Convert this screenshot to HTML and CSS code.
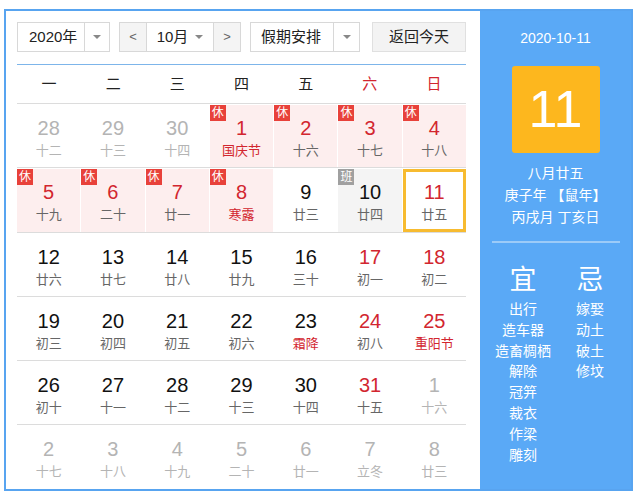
FILE: index.html
```html
<!DOCTYPE html>
<html lang="zh-CN">
<head>
<meta charset="utf-8">
<title>万年历</title>
<link rel="stylesheet" href="styles.css">
</head>
<body>
<div class="cal">
  <div class="main">
    <div class="controls">
      <div class="sel year"><span class="lbl">2020年</span><span class="arr"><i class="caret"></i></span></div>
      <div class="month-group">
        <span class="nav">&lt;</span>
        <span class="mon">10月<i class="caret"></i></span>
        <span class="nav">&gt;</span>
      </div>
      <div class="sel hol"><span class="lbl">假期安排</span><span class="arr"><i class="caret"></i></span></div>
      <div class="today-btn">返回今天</div>
    </div>
    <div class="week">
      <span>一</span><span>二</span><span>三</span><span>四</span><span>五</span><span class="red">六</span><span class="red">日</span>
    </div>
    <div class="row">
      <div class="cell out"><b>28</b><em>十二</em></div>
      <div class="cell out"><b>29</b><em>十三</em></div>
      <div class="cell out"><b>30</b><em>十四</em></div>
      <div class="cell rest"><i class="tag">休</i><b>1</b><em class="fest">国庆节</em></div>
      <div class="cell rest"><i class="tag">休</i><b>2</b><em>十六</em></div>
      <div class="cell rest"><i class="tag">休</i><b>3</b><em>十七</em></div>
      <div class="cell rest"><i class="tag">休</i><b>4</b><em>十八</em></div>
    </div>
    <div class="row">
      <div class="cell rest"><i class="tag">休</i><b>5</b><em>十九</em></div>
      <div class="cell rest"><i class="tag">休</i><b>6</b><em>二十</em></div>
      <div class="cell rest"><i class="tag">休</i><b>7</b><em>廿一</em></div>
      <div class="cell rest"><i class="tag">休</i><b>8</b><em class="fest">寒露</em></div>
      <div class="cell"><b>9</b><em>廿三</em></div>
      <div class="cell work"><i class="tag gray">班</i><b>10</b><em>廿四</em></div>
      <div class="cell today"><b>11</b><em>廿五</em></div>
    </div>
    <div class="row">
      <div class="cell"><b>12</b><em>廿六</em></div>
      <div class="cell"><b>13</b><em>廿七</em></div>
      <div class="cell"><b>14</b><em>廿八</em></div>
      <div class="cell"><b>15</b><em>廿九</em></div>
      <div class="cell"><b>16</b><em>三十</em></div>
      <div class="cell wk"><b>17</b><em>初一</em></div>
      <div class="cell wk"><b>18</b><em>初二</em></div>
    </div>
    <div class="row">
      <div class="cell"><b>19</b><em>初三</em></div>
      <div class="cell"><b>20</b><em>初四</em></div>
      <div class="cell"><b>21</b><em>初五</em></div>
      <div class="cell"><b>22</b><em>初六</em></div>
      <div class="cell"><b>23</b><em class="fest">霜降</em></div>
      <div class="cell wk"><b>24</b><em>初八</em></div>
      <div class="cell wk"><b>25</b><em class="fest">重阳节</em></div>
    </div>
    <div class="row">
      <div class="cell"><b>26</b><em>初十</em></div>
      <div class="cell"><b>27</b><em>十一</em></div>
      <div class="cell"><b>28</b><em>十二</em></div>
      <div class="cell"><b>29</b><em>十三</em></div>
      <div class="cell"><b>30</b><em>十四</em></div>
      <div class="cell wk"><b>31</b><em>十五</em></div>
      <div class="cell out"><b>1</b><em>十六</em></div>
    </div>
    <div class="row last">
      <div class="cell out"><b>2</b><em>十七</em></div>
      <div class="cell out"><b>3</b><em>十八</em></div>
      <div class="cell out"><b>4</b><em>十九</em></div>
      <div class="cell out"><b>5</b><em>二十</em></div>
      <div class="cell out"><b>6</b><em>廿一</em></div>
      <div class="cell out"><b>7</b><em>立冬</em></div>
      <div class="cell out"><b>8</b><em>廿三</em></div>
    </div>
  </div>
  <div class="side">
    <div class="date">2020-10-11</div>
    <div class="bigday">11</div>
    <div class="lunar">
      <div>八月廿五</div>
      <div>庚子年 【鼠年】</div>
      <div>丙戌月 丁亥日</div>
    </div>
    <div class="sep"></div>
    <div class="yiji">
      <div class="col yi">
        <div class="hd">宜</div>
        <div>出行</div><div>造车器</div><div>造畜椆栖</div><div>解除</div><div>冠笄</div><div>裁衣</div><div>作梁</div><div>雕刻</div>
      </div>
      <div class="col ji">
        <div class="hd">忌</div>
        <div>嫁娶</div><div>动土</div><div>破土</div><div>修坟</div>
      </div>
    </div>
  </div>
</div>
</body>
</html>
```

FILE: styles.css
```css
* { box-sizing: border-box; }
html, body { margin: 0; padding: 0; background: #fff; }
body {
  font-family: "Liberation Sans", "Noto Sans CJK SC", sans-serif;
  color: #222;
}
.cal {
  margin: 9px 0 0 4px;
  width: 629px;
  height: 482px;
  border: 2px solid #58a4f0;
  display: flex;
}
.main {
  width: 474px;
  padding: 11px 14px 0 11px;
}
.controls {
  display: flex;
  height: 30px;
}
.sel {
  display: flex;
  border: 1px solid #d8d8d8;
  background: #fff;
  height: 30px;
  font-size: 15px;
  line-height: 28px;
}
.sel .lbl { padding: 0 0 0 11px; }
.year { width: 93px; }
.year .lbl { width: 66px; }
.hol { width: 110px; margin-left: 9px; }
.hol .lbl { width: 82px; padding-left: 10px; }
.sel .arr {
  flex: 1;
  border-left: 1px solid #d8d8d8;
  display: flex;
  align-items: center;
  justify-content: center;
}
.caret {
  display: inline-block;
  width: 0; height: 0;
  border-left: 4px solid transparent;
  border-right: 4px solid transparent;
  border-top: 4px solid #888;
}
.month-group {
  display: flex;
  margin-left: 9px;
  width: 122px;
  height: 30px;
  border: 1px solid #d8d8d8;
  font-size: 15px;
  line-height: 28px;
}
.nav {
  width: 26px;
  text-align: center;
  background: #f4f4f4;
  color: #666;
  font-size: 13px;
}
.mon {
  flex: 1;
  border-left: 1px solid #d8d8d8;
  border-right: 1px solid #d8d8d8;
  display: flex;
  align-items: center;
  justify-content: center;
  gap: 7px;
  background: #fff;
}
.today-btn {
  margin-left: 12px;
  width: 94px;
  height: 30px;
  border: 1px solid #e0e0e0;
  background: #f3f3f3;
  font-size: 15px;
  line-height: 28px;
  text-align: center;
}
.week {
  margin-top: 12px;
  border-top: 1px solid #7db5ea;
  border-bottom: 1px solid #dcdcdc;
  height: 40px;
  display: grid;
  grid-template-columns: repeat(7, 1fr);
  font-size: 15px;
  line-height: 38px;
  text-align: center;
}
.red { color: #d2262f; }
.row {
  display: grid;
  grid-template-columns: repeat(7, 1fr);
  column-gap: 1px;
  height: 64.3px;
  border-bottom: 1px solid #dcdcdc;
  padding-top: 1px;
}
.row.last { border-bottom: none; }
.cell {
  position: relative;
  text-align: center;
  padding-top: 11px;
}
.cell b {
  display: block;
  font-weight: normal;
  font-size: 20px;
  line-height: 24px;
  color: #111;
}
.cell em {
  display: block;
  font-style: normal;
  font-size: 13px;
  line-height: 22px;
  color: #666;
}
.cell.out b, .cell.out em { color: #b4b4b4; }
.cell.rest { background: #fdeeee; }
.cell.rest b, .cell.wk b { color: #d2262f; }
.cell em.fest { color: #d2262f; }
.cell.work { background: #f4f4f4; }
.cell.today {
  border: 3px solid #f7bb30;
  padding-top: 8px;
}
.cell.today b { color: #d2262f; }
.tag {
  position: absolute;
  left: 0; top: 0;
  width: 16px; height: 16px;
  background: #e8413a;
  color: #fff;
  font-style: normal;
  font-size: 12px;
  line-height: 16px;
  text-align: center;
}
.tag.gray { background: #a0a0a0; }
.side {
  flex: 1;
  background: #5aa9f6;
  color: #fff;
  display: flex;
  flex-direction: column;
  align-items: center;
}
.date {
  margin-top: 18px;
  font-size: 14px;
  line-height: 18px;
}
.bigday {
  margin-top: 19px;
  width: 88px;
  height: 87px;
  background: #fdb71e;
  border-radius: 3px;
  font-size: 52px;
  line-height: 87px;
  text-align: center;
}
.lunar {
  margin-top: 9px;
  font-size: 14px;
  line-height: 22px;
  text-align: center;
}
.sep {
  margin-top: 13px;
  width: 128px;
  height: 2px;
  background: #9ccbf8;
}
.yiji {
  align-self: flex-start;
  display: flex;
  margin-top: 18px;
}
.col {
  font-size: 14px;
  line-height: 20.8px;
  text-align: center;
}
.col.yi { width: 86px; }
.col.ji { width: 48px; }
.hd {
  font-size: 27px;
  line-height: 38px;
  font-weight: normal;
}
```
